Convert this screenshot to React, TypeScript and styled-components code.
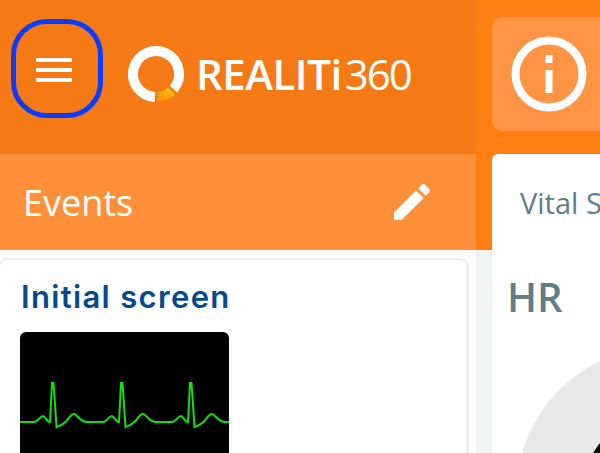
import styled, { createGlobalStyle } from "styled-components";

const GlobalStyle = createGlobalStyle`
  html, body {
    margin: 0;
    padding: 0;
    width: 600px;
    height: 453px;
    overflow: hidden;
    font-family: "Open Sans", sans-serif;
  }
`;

// ===== layout =====

const Screen = styled.div`
  width: 600px;
  height: 453px;
  display: grid;
  grid-template-columns: 476px 124px;
  overflow: hidden;
  background-color: #f3f5f5;
`;

const LeftColumn = styled.div`
  display: flex;
  flex-direction: column;
  height: 453px;
  overflow: hidden;
  background-color: #ffffff;
`;

const RightColumn = styled.div`
  position: relative;
  padding: 17px 0 0 16px;
  height: 453px;
  box-sizing: border-box;
  overflow: hidden;
  background: linear-gradient(#ff7f13 250px, #f3f5f5 250px);
`;

// ===== header =====

const Header = styled.header`
  height: 154px;
  flex: none;
  display: flex;
  align-items: flex-start;
  background-color: #f57a15;
`;

const MenuButton = styled.button`
  width: 92px;
  height: 99px;
  margin: 19px 0 0 11px;
  padding: 3px 7px 0 0;
  box-sizing: border-box;
  background: none;
  border: 5px solid #0a3cff;
  border-radius: 36px;
  display: flex;
  flex-direction: column;
  align-items: center;
  justify-content: center;
  gap: 6px;
`;

const MenuLine = styled.span`
  width: 36px;
  height: 4px;
  background-color: #ffffff;
`;

const Logo = styled.div`
  display: flex;
  align-items: center;
  margin: 46px 0 0 25px;
  gap: 12px;
  color: #ffffff;
`;

const LogoWord = styled.div`
  display: flex;
  align-items: baseline;
  font-size: 42px;
  line-height: 56px;
`;

const LogoStrong = styled.span`
  font-weight: 600;
  letter-spacing: -0.5px;
`;

const LogoLight = styled.span`
  font-weight: 400;
  letter-spacing: -2px;
  margin-left: 3px;
`;

const SubHeader = styled.div`
  height: 96px;
  flex: none;
  display: flex;
  align-items: center;
  justify-content: space-between;
  padding: 0 40px 0 23px;
  background-color: #ff8f38;
  color: #ffffff;
`;

const SubTitle = styled.h2`
  margin: 0;
  font-size: 36px;
  font-weight: 400;
`;

// ===== event card =====

const EventCard = styled.section`
  margin: 10px 9px 0 0;
  padding: 19px 20px 0;
  flex: 1;
  background-color: #ffffff;
  border-radius: 6px 6px 0 0;
  box-shadow: 0 0 3px rgba(0, 0, 0, 0.28);
`;

const EventTitle = styled.h3`
  margin: 0 0 18px 1px;
  font-family: "Inter", "Open Sans", sans-serif;
  font-size: 31px;
  line-height: 35px;
  font-weight: 600;
  letter-spacing: 1.35px;
  white-space: nowrap;
  color: #05498f;
`;

const Monitor = styled.div`
  width: 209px;
  height: 160px;
  background-color: #000000;
  border-radius: 6px 6px 0 0;
  overflow: hidden;
`;

// ===== right side =====

const InfoTile = styled.div`
  width: 200px;
  height: 114px;
  display: flex;
  align-items: center;
  padding-left: 19px;
  box-sizing: border-box;
  border-radius: 10px;
  background-color: #ff9445;
`;

const VitalsPanel = styled.section`
  position: absolute;
  top: 154px;
  left: 16px;
  width: 200px;
  height: 320px;
  background-color: #ffffff;
  border-radius: 6px 0 0 0;
  box-shadow: 0 0 2px rgba(0, 0, 0, 0.08);
`;

const VitalsTab = styled.div`
  padding: 32px 0 0 28px;
  font-size: 29px;
  line-height: 34px;
  white-space: nowrap;
  color: #607d8b;
`;

const VitalLabel = styled.div`
  padding: 54px 0 0 15px;
  font-size: 40px;
  line-height: 46px;
  font-weight: 600;
  color: #607d8b;
`;

const Gauge = styled.svg`
  position: absolute;
  left: 0;
  top: 180px;
`;

// one heartbeat of the trace, starting at x
const beat = (x: number) =>
  `L${x + 14} 90 C${x + 18} 90 ${x + 20} 84 ${x + 23} 84 C${x + 25} 84 ${x + 27} 90 ${x + 30} 90 ` +
  `L${x + 32} 51 L${x + 33.5} 51 L${x + 36.5} 95 C${x + 39} 94 ${x + 42} 93 ${x + 44} 91 ` +
  `C${x + 47} 90 ${x + 50} 82 ${x + 54} 82 C${x + 57} 82 ${x + 60} 90 ${x + 67} 90`;

const tracePath = `M0 90 ${[0, 69, 138].map(beat).join(" ")} L209 90`;

export default function App() {
  return (
    <>
      <GlobalStyle />
      <Screen>
        <LeftColumn>
          <Header>
            <MenuButton type="button" aria-label="Menu">
              <MenuLine />
              <MenuLine />
              <MenuLine />
            </MenuButton>
            <Logo>
              <svg width="56" height="56" viewBox="0 0 56 56">
                <defs>
                  <linearGradient id="logoArc" x1="0" y1="1" x2="1" y2="0">
                    <stop offset="0" stopColor="#f8950e" />
                    <stop offset="1" stopColor="#ffbd0a" />
                  </linearGradient>
                </defs>
                <path
                  d="M27 51 A23 23 0 1 1 45.4 43.1"
                  fill="none"
                  stroke="#ffffff"
                  strokeWidth="10"
                />
                <path
                  d="M29.2 51 A23 23 0 0 0 43.7 44.8"
                  fill="none"
                  stroke="url(#logoArc)"
                  strokeWidth="10"
                />
              </svg>
              <LogoWord>
                <LogoStrong>REALITi</LogoStrong>
                <LogoLight>360</LogoLight>
              </LogoWord>
            </Logo>
          </Header>
          <SubHeader>
            <SubTitle>Events</SubTitle>
            <svg width="48" height="48" viewBox="0 0 24 24" fill="#ffffff">
              <path d="M3 17.25V21h3.75L17.81 9.94l-3.75-3.75L3 17.25zM20.71 7.04c.39-.39.39-1.02 0-1.41l-2.34-2.34c-.39-.39-1.02-.39-1.41 0l-1.83 1.83 3.75 3.75 1.83-1.83z" />
            </svg>
          </SubHeader>
          <EventCard>
            <EventTitle>Initial screen</EventTitle>
            <Monitor>
              <svg width="209" height="120" viewBox="0 0 209 120">
                <path d={tracePath} fill="none" stroke="#10e00c" strokeWidth="2" />
              </svg>
            </Monitor>
          </EventCard>
        </LeftColumn>
        <RightColumn>
          <InfoTile>
            <svg width="76" height="76" viewBox="0 0 76 76">
              <circle cx="38" cy="38" r="33.5" fill="none" stroke="#ffffff" strokeWidth="8" />
              <rect x="34.5" y="19" width="7" height="8" fill="#ffffff" />
              <rect x="34.5" y="34" width="7" height="23" fill="#ffffff" />
            </svg>
          </InfoTile>
          <VitalsPanel>
            <VitalsTab>Vital Signs</VitalsTab>
            <VitalLabel>HR</VitalLabel>
            <Gauge width="108" height="120" viewBox="0 0 108 120">
              <circle cx="171" cy="160" r="147" fill="#e9e9e9" />
              <circle cx="171" cy="160" r="81" fill="#000000" />
            </Gauge>
          </VitalsPanel>
        </RightColumn>
      </Screen>
    </>
  );
}
